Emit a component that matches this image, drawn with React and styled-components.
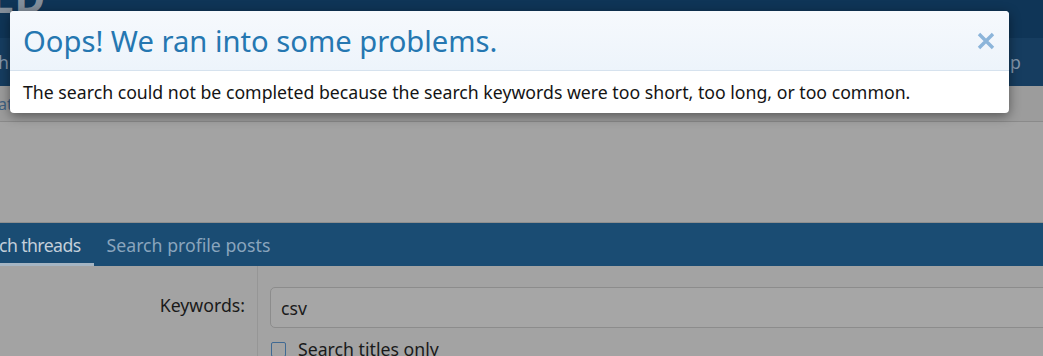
import React from "react";
import styled, { createGlobalStyle } from "styled-components";

const Global = createGlobalStyle`
  html, body { margin: 0; padding: 0; }
  body {
    width: 1043px;
    height: 356px;
    overflow: hidden;
    font-family: "Noto Sans", "Open Sans", sans-serif;
    background: #a3a3a3;
  }
`;

const Page = styled.div`
  position: relative;
  width: 1043px;
  height: 356px;
  overflow: hidden;
`;

const Header = styled.div`
  height: 38px;
  background: #0f3557;
  overflow: hidden;
`;

const Logo = styled.div`
  margin: -24px 0 0 -10px;
  font-size: 42px;
  font-weight: 700;
  line-height: 42px;
  color: #848f9b;
  letter-spacing: 1px;
`;

const Nav = styled.div`
  height: 48px;
  background: #163d60;
  display: flex;
  align-items: center;
  justify-content: space-between;
  color: #8396ab;
  font-size: 17.7px;
`;

const NavItem = styled.span`
  margin: ${(p) => (p.$edge === "left" ? "0 0 0 -2px" : "0 22px 0 0")};
`;

const SubNav = styled.div`
  height: 35px;
  background: #9c9c9c;
  border-bottom: 1px solid #8a8a8a;
  display: flex;
  align-items: center;
  color: #3f6283;
  font-size: 16px;
`;

const Content = styled.div`
  height: 100px;
`;

const Tabs = styled.div`
  height: 43px;
  background: #1a4c73;
  display: flex;
  align-items: stretch;
  border-top: 1px solid #8f8f8f;
`;

const Tab = styled.div`
  display: flex;
  align-items: center;
  padding: 3px 13px 0 ${(p) => (p.$first ? "0" : "13px")};
  font-size: 17.7px;
  letter-spacing: ${(p) => (p.$first ? "-0.6px" : "0")};
  color: ${(p) => (p.$active ? "#c4cfda" : "#8aa5bd")};
  border-bottom: 3px solid ${(p) => (p.$active ? "#a5b5c3" : "transparent")};
  margin-left: ${(p) => (p.$first ? "-1px" : "0")};
`;

const FormRow = styled.div`
  display: grid;
  grid-template-columns: 258px 1fr;
  height: 100px;
`;

const Label = styled.div`
  border-right: 1px solid #969696;
  text-align: right;
  padding: 27px 12px 0 0;
  font-size: 17.7px;
  color: #1a1a1a;
`;

const Field = styled.div`
  padding: 21px 0 0 12px;
`;

const Input = styled.div`
  height: 39px;
  margin-right: -20px;
  border: 1px solid #8c8c8c;
  border-radius: 5px;
  background: #a6a6a6;
  display: flex;
  align-items: center;
  padding-left: 10px;
  font-size: 17.7px;
  color: #1a1a1a;
`;

const Check = styled.div`
  display: flex;
  align-items: center;
  gap: 12px;
  margin-top: 12px;
  padding-left: 1px;
  font-size: 17.7px;
  line-height: 18px;
  color: #1a1a1a;
`;

const Box = styled.span`
  width: 13px;
  height: 13px;
  border: 1.5px solid #3f6993;
  border-radius: 2px;
`;

const Modal = styled.div`
  position: absolute;
  left: 10px;
  top: 11px;
  width: 999px;
  background: #fff;
  border-radius: 4px;
  box-shadow: 0 3px 12px rgba(0, 0, 0, 0.45);
  overflow: hidden;
`;

const ModalHeader = styled.div`
  height: 59px;
  display: flex;
  align-items: center;
  justify-content: space-between;
  padding: 0 13px 0 13px;
  background: linear-gradient(to bottom, #f6f9fd, #edf4fb);
  border-bottom: 1px solid #d6e2ee;
`;

const Title = styled.h2`
  margin: 0;
  font-weight: 400;
  font-size: 29.2px;
  color: #2577b1;
`;

const Close = styled.button`
  border: 0;
  background: none;
  padding: 0;
  width: 20px;
  height: 20px;
  display: flex;
  align-items: center;
  justify-content: center;
  cursor: pointer;
`;

const ModalBody = styled.div`
  padding: 10px 13px 10px 13px;
  font-size: 17.7px;
  line-height: 22px;
  color: #141414;
`;

export default function App() {
  return (
    <>
      <Global />
      <Page>
        <Header>
          <Logo>LD</Logo>
        </Header>
        <Nav>
          <NavItem $edge="left">h</NavItem>
          <NavItem>p</NavItem>
        </Nav>
        <SubNav>
          <NavItem $edge="left">at</NavItem>
        </SubNav>
        <Content />
        <Tabs>
          <Tab $active $first>
            ch threads
          </Tab>
          <Tab>Search profile posts</Tab>
        </Tabs>
        <FormRow>
          <Label>Keywords:</Label>
          <Field>
            <Input>csv</Input>
            <Check>
              <Box />
              Search titles only
            </Check>
          </Field>
        </FormRow>

        <Modal>
          <ModalHeader>
            <Title>Oops! We ran into some problems.</Title>
            <Close aria-label="Close">
              <svg width="18" height="18" viewBox="0 0 18 18">
                <path
                  d="M2 2 L16 16 M16 2 L2 16"
                  stroke="#8cb5da"
                  strokeWidth="3.4"
                  strokeLinecap="butt"
                />
              </svg>
            </Close>
          </ModalHeader>
          <ModalBody>
            The search could not be completed because the search keywords were
            too short, too long, or too common.
          </ModalBody>
        </Modal>
      </Page>
    </>
  );
}
